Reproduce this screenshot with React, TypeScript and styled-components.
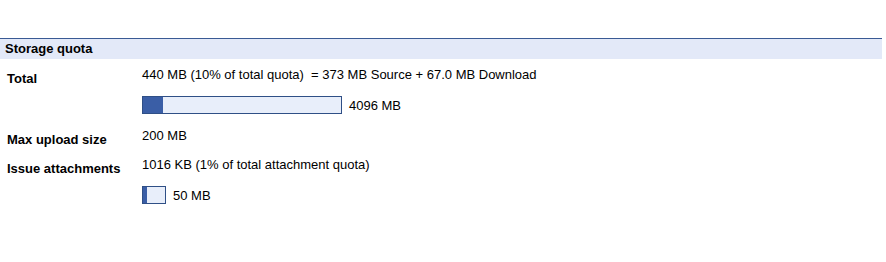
import React from 'react';
import styled, { createGlobalStyle } from 'styled-components';

const GlobalStyle = createGlobalStyle`
  body {
    margin: 0;
    background: #fff;
    font-family: "Liberation Sans", Arial, sans-serif;
    font-size: 13px;
    color: #000;
  }
`;

const Page = styled.div`
  padding-top: 38px;
  width: 882px;
`;

const SectionHeader = styled.div`
  border-top: 1px solid #3a5a94;
  background: #e3e9f8;
  height: 20px;
  line-height: 20px;
  padding-left: 5px;
  font-weight: bold;
`;

const Table = styled.div`
  display: grid;
  grid-template-columns: 135px 1fr;
  padding: 8px 0 0 7px;
  row-gap: 14px;
  line-height: 15px;
`;

// labels sit a little below the value baseline, without growing the row
const Label = styled.div`
  font-weight: bold;
  padding-top: 4px;
  margin-bottom: -4px;
`;

const Value = styled.div`
  display: flex;
  flex-direction: column;
  gap: 14px;
`;

const BarRow = styled.div`
  display: flex;
  align-items: center;
  gap: 7px;
`;

const Bar = styled.div<{ $width: number }>`
  width: ${p => p.$width}px;
  height: 16px;
  border: 1px solid #2f4f86;
  background: #e8eefa;
  display: flex;
`;

const Fill = styled.div`
  background: #3a5ea6;
  height: 100%;
`;

const Quota = ({ width, used, label }: { width: number; used: number; label: string }) => (
  <BarRow>
    <Bar $width={width}>
      <Fill style={{ width: used }} />
    </Bar>
    <span>{label}</span>
  </BarRow>
);

const App: React.FC = () => (
  <Page>
    <GlobalStyle />
    <SectionHeader>Storage quota</SectionHeader>
    <Table>
      <Label>Total</Label>
      <Value>
        <span>440 MB (10% of total quota) &nbsp;= 373 MB Source + 67.0 MB Download</span>
        <Quota width={198} used={20} label="4096 MB" />
      </Value>
      <Label>Max upload size</Label>
      <Value>
        <span>200 MB</span>
      </Value>
      <Label>Issue attachments</Label>
      <Value>
        <span>1016 KB (1% of total attachment quota)</span>
        <Quota width={22} used={4} label="50 MB" />
      </Value>
    </Table>
  </Page>
);

export default App;
